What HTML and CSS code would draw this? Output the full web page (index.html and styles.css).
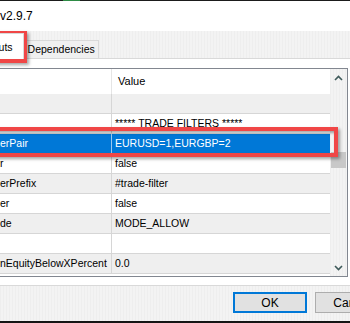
FILE: index.html
```html
<!DOCTYPE html>
<html lang="en">
<head>
    <meta charset="UTF-8">
    <title>Properties</title>
    <link rel="stylesheet" href="styles.css">
</head>
<body>
    <div class="window">
        <div class="topline"><span class="topline-glow"></span></div>
        <div class="titlebar">v2.9.7</div>

        <!-- Tabs -->
        <div class="tabstrip">
            <div class="tab tab-active">Inputs</div>
            <div class="tab">Dependencies</div>
        </div>

        <div class="panel">
            <div class="list">
                <div class="grid">
                    <div class="row row-head">
                        <div class="cell name"></div>
                        <div class="cell value">Value</div>
                    </div>
                    <div class="row alt">
                        <div class="cell name"></div>
                        <div class="cell value"></div>
                    </div>
                    <div class="row">
                        <div class="cell name"></div>
                        <div class="cell value">***** TRADE FILTERS *****</div>
                    </div>
                    <div class="row selected">
                        <div class="cell name">erPair</div>
                        <div class="cell value">EURUSD=1,EURGBP=2</div>
                    </div>
                    <div class="row">
                        <div class="cell name">r</div>
                        <div class="cell value">false</div>
                    </div>
                    <div class="row alt">
                        <div class="cell name">erPrefix</div>
                        <div class="cell value">#trade-filter</div>
                    </div>
                    <div class="row">
                        <div class="cell name">er</div>
                        <div class="cell value">false</div>
                    </div>
                    <div class="row alt">
                        <div class="cell name">de</div>
                        <div class="cell value">MODE_ALLOW</div>
                    </div>
                    <div class="row">
                        <div class="cell name"></div>
                        <div class="cell value"></div>
                    </div>
                    <div class="row alt">
                        <div class="cell name">nEquityBelowXPercent</div>
                        <div class="cell value">0.0</div>
                    </div>
                </div>

                <div class="vscroll">
                    <div class="arrow">
                        <svg width="9" height="6" viewBox="0 0 9 6"><path d="M1 5 L4.5 1.5 L8 5" fill="none" stroke="#3f5a5a" stroke-width="1.6"/></svg>
                    </div>
                    <div class="thumb"></div>
                    <div class="arrow arrow-down">
                        <svg width="9" height="6" viewBox="0 0 9 6"><path d="M1 1 L4.5 4.5 L8 1" fill="none" stroke="#3f5a5a" stroke-width="1.6"/></svg>
                    </div>
                </div>
            </div>
        </div>

        <div class="footer">
            <button class="btn btn-default">OK</button>
            <button class="btn">Cancel</button>
        </div>
        <div class="bottomline"></div>

        <!-- red highlight marks -->
        <div class="mark mark-tab"></div>
        <div class="mark mark-row"></div>
    </div>
</body>
</html>
```

FILE: styles.css
```css
* {
    box-sizing: border-box;
}
body {
    margin: 0;
    background-color: #fff;
    font-family: "Liberation Sans", Arial, sans-serif;
    color: #000;
}
.window {
    position: relative;
    width: 350px;
    height: 323px;
    overflow: hidden;
}
.topline {
    display: flex;
    height: 1px;
    background-color: #1b1b1b;
}
.topline-glow {
    margin-left: 63px;
    width: 17px;
    background-color: #2e8b45;
}
.titlebar {
    height: 30px;
    line-height: 30px;
    font-size: 12px;
    white-space: nowrap;
}

/* striped grey like the dialog face */
.tabstrip,
.vscroll,
.footer {
    background-color: #f0f0f0;
    background-image: repeating-linear-gradient(90deg, #eeeeee 0 1px, #f3f3f3 1px 3px);
}

/* tabs */
.tabstrip {
    display: flex;
    align-items: flex-end;
    height: 28px;
    border-bottom: 1px solid #d9d9d9;
}
.tab {
    height: 18px;
    padding: 0 3px;
    line-height: 17px;
    font-size: 10.5px;
    white-space: nowrap;
    background-color: #f0f0f0;
    border: 1px solid #d9d9d9;
    border-bottom: none;
}
.tab-active {
    position: relative;
    z-index: 1;
    height: 26px;
    margin-left: -20px;
    margin-bottom: -1px;
    padding: 5px 10px 0 3px;
    background-color: #fff;
}

/* panel with list */
.panel {
    padding: 9px 2px 8px 0;
    border-bottom: 1px solid #d9d9d9;
}
.list {
    display: flex;
    height: 209px;
    margin-left: -1px;
    border: 1px solid #828790;
    background-color: #fff;
}
.grid {
    flex: 1;
}
.row {
    display: flex;
    height: 20px;
    line-height: 19px;
    font-size: 10.5px;
    white-space: nowrap;
    border-bottom: 1px solid #d6d6d6;
}
.row.alt {
    background-color: #efefef;
}
.row-head {
    height: 25px;
    line-height: 25px;
    font-size: 11px;
    border-bottom: none;
}
.row.selected {
    background-color: #0078d7;
    color: #fff;
}
.cell {
    overflow: hidden;
}
.name {
    width: 112px;
    border-right: 1px solid #d6d6d6;
}
.row-head .name {
    border-right-color: #e5e5e5;
}
.row.selected .name {
    border-right-color: #9cc8ee;
}
.value {
    flex: 1;
    padding-left: 3px;
}
.row-head .value {
    padding-left: 6px;
}
.vscroll {
    display: flex;
    flex-direction: column;
    width: 17px;
}
.arrow {
    display: flex;
    justify-content: center;
    align-items: center;
    height: 17px;
}
.arrow-down {
    margin-top: auto;
}
.thumb {
    height: 16px;
    margin: 66px 1px 0 1px;
    background-color: #c8c8c8;
}

/* buttons */
.footer {
    display: flex;
    gap: 8px;
    height: 35px;
    padding: 6px 0 0 233px;
}
.btn {
    flex: none;
    width: 74px;
    height: 21px;
    padding: 0;
    font-family: "Liberation Sans", Arial, sans-serif;
    font-size: 12px;
    color: #000;
    background-color: #e1e1e1;
    border: 1px solid #adadad;
}
.btn-default {
    border: 2px solid #0078d7;
}
.bottomline {
    height: 2px;
    background-color: #151515;
}

/* annotation frames */
.mark {
    position: absolute;
    border: 4px solid #f04646;
    box-shadow: 2px 2px 3px rgba(0, 0, 0, 0.35), inset 2px 2px 3px rgba(0, 0, 0, 0.35);
}
.mark-tab {
    left: -10px;
    top: 31px;
    width: 37px;
    height: 32px;
}
.mark-row {
    left: -10px;
    top: 127px;
    width: 348px;
    height: 30px;
}
```
